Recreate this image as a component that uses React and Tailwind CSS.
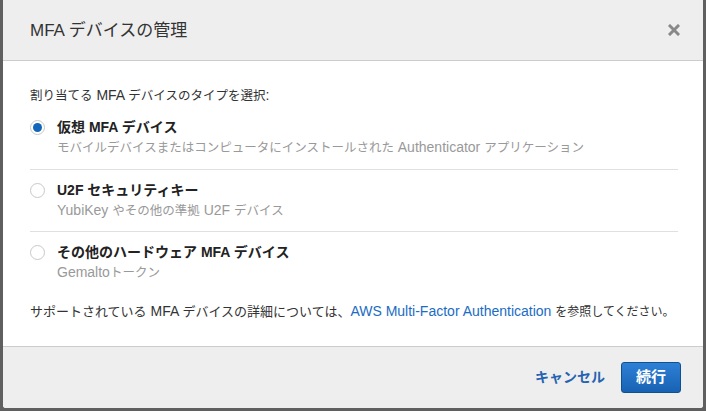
import React, { useState } from 'react';

const options = [
    {
        id: 'virtual',
        label: '仮想 MFA デバイス',
        desc: 'モバイルデバイスまたはコンピュータにインストールされた Authenticator アプリケーション',
    },
    {
        id: 'u2f',
        label: 'U2F セキュリティキー',
        desc: 'YubiKey やその他の準拠 U2F デバイス',
    },
    {
        id: 'hardware',
        label: 'その他のハードウェア MFA デバイス',
        desc: 'Gemaltoトークン',
    },
];

// 和文部分だけ少し小さくする（参照画像の和文フォント幅に合わせる）
const Mixed = ({ text, size = 'text-[12.5px]' }) =>
    text.split(/([\u3000-\u9fff\uff00-\uffef]+)/).map((part, i) =>
        /[\u3000-\u9fff\uff00-\uffef]/.test(part) ? (
            <span key={i} className={size + ' leading-none'}>{part}</span>
        ) : (
            <React.Fragment key={i}>{part}</React.Fragment>
        )
    );

const Radio = ({ checked }) => (
    <span className="mt-[3px] flex h-[15px] w-[15px] shrink-0 items-center justify-center rounded-full border border-[#c8c8c8] bg-white">
        {checked && <span className="h-[9px] w-[9px] rounded-full bg-[#1166bb]"></span>}
    </span>
);

export default function App() {
    const [selected, setSelected] = useState('virtual');

    return (
        <div
            className="h-[411px] w-[706px] bg-[#5f5f5f] px-[3px] pb-[3px]"
            style={{ fontFamily: '"Liberation Sans", "Noto Sans CJK JP", sans-serif' }}
        >
            <div className="flex h-full flex-col overflow-hidden rounded-b-[3px] bg-white">
                {/* ヘッダー */}
                <div className="flex h-[61px] shrink-0 items-center justify-between border-b border-[#cccccc] bg-[#eeeeee] pl-[27px] pr-[23px]">
                    <h1 className="text-[17px] leading-none text-[#333333]">MFA デバイスの管理</h1>
                    <svg width="12" height="12" viewBox="0 0 12 12" className="text-[#888888]">
                        <path d="M2 2 L10 10 M10 2 L2 10" stroke="currentColor" strokeWidth="3" strokeLinecap="square" />
                    </svg>
                </div>

                {/* 本文 */}
                <div className="flex-1 px-[27px] pt-[24px] text-[14px] leading-[20px] text-[#333333]">
                    <p className="mb-[12px] h-[20px]">
                        <Mixed text="割り当てる MFA デバイスのタイプを選択:" />
                    </p>
                    <div>
                        {options.map((opt, i) => (
                            <div
                                key={opt.id}
                                onClick={() => setSelected(opt.id)}
                                className={
                                    'mr-[-2px] flex cursor-pointer gap-[12px] ' +
                                    (i === 0 ? 'pb-[12px] ' : 'pb-[11px] pt-[10px] ') +
                                    (i < options.length - 1 ? 'border-b border-[#e0e0e0]' : '')
                                }
                            >
                                <Radio checked={selected === opt.id} />
                                <div>
                                    <div className="h-[20px] font-bold text-[#222222]">{opt.label}</div>
                                    <div className="h-[20px] text-[#999999]">
                                        <Mixed text={opt.desc} />
                                    </div>
                                </div>
                            </div>
                        ))}
                    </div>
                    <p className="mt-[8px] h-[20px] whitespace-nowrap">
                        <Mixed text="サポートされている MFA デバイスの詳細については、" size="text-[13px]" />
                        <a className="text-[#1a6cc4]">AWS Multi-Factor Authentication</a>{' '}
                        <Mixed text="を参照してください。" size="text-[12px]" />
                    </p>
                </div>

                {/* フッター */}
                <div className="flex h-[62px] shrink-0 items-center justify-end gap-[16px] border-t border-[#cccccc] bg-[#eeeeee] pr-[22px]">
                    <button className="text-[14px] font-bold text-[#2563b0]">キャンセル</button>
                    <button className="h-[31px] w-[60px] rounded-[3px] border border-[#11508f] bg-gradient-to-b from-[#2d80d6] to-[#1862b4] text-[15px] font-bold text-white">
                        続行
                    </button>
                </div>
            </div>
        </div>
    );
}
